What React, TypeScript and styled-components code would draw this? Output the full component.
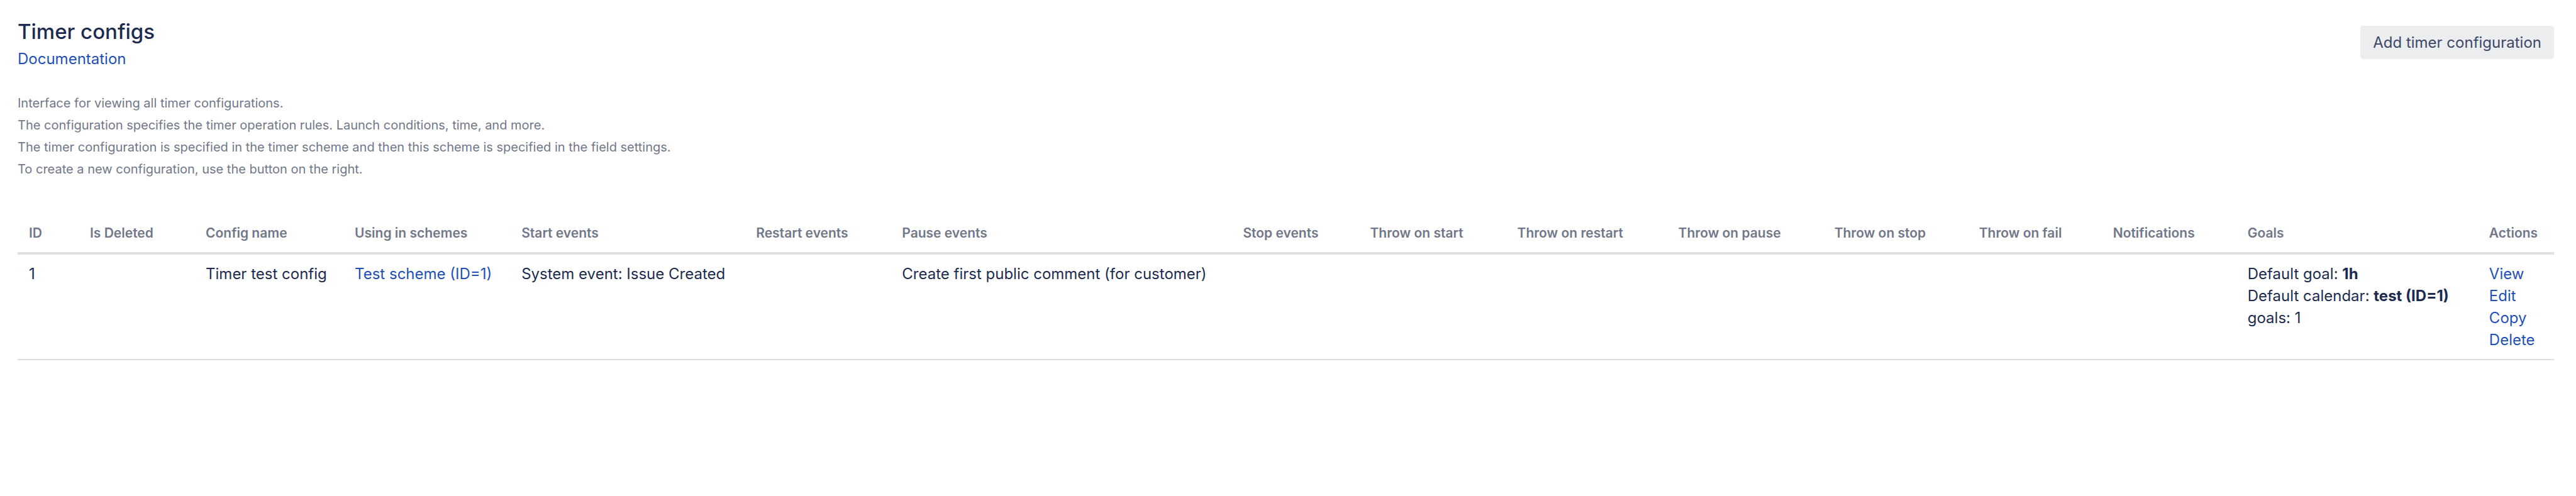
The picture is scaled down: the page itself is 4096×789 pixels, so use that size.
import React from "react";
import styled, { createGlobalStyle } from "styled-components";

const GlobalStyle = createGlobalStyle`
  *, *::before, *::after { box-sizing: border-box; }
  body {
    margin: 0;
    background: #fff;
    color: #1c2b4f;
    font-family: Inter, "Liberation Sans", sans-serif;
    font-size: 24px;
    line-height: 35px;
  }
`;

const Page = styled.main`
  padding: 30px 35px 40px 28px;
`;

const Header = styled.header`
  display: flex;
  justify-content: space-between;
  align-items: flex-start;
`;

const Title = styled.h1`
  margin: 0;
  font-size: 33px;
  line-height: 40px;
  font-weight: 500;
`;

const Link = styled.a`
  color: #2050b8;
  text-decoration: none;
  &:hover { text-decoration: underline; }
`;

const HeaderLink = styled(Link)`
  display: block;
  margin-top: 6px;
`;

const AddButton = styled.button`
  margin-top: 11px;
  padding: 9px 20px;
  border: 0;
  border-radius: 5px;
  background: #ebedef;
  color: #3c4868;
  font: inherit;
  cursor: pointer;
`;

const Description = styled.div`
  margin-top: 36px;
  color: #707789;
  font-size: 20px;
  p { margin: 0; }
`;

const Table = styled.table`
  width: 100%;
  margin-top: 48px;
  table-layout: fixed;
  border-collapse: collapse;
  text-align: left;
`;

const Column = styled.col<{ $share: number }>`
  width: ${({ $share }) => $share}%;
`;

const HeadCell = styled.th`
  padding: 18px 0 13px 18px;
  border-bottom: 4px solid #dfe1e1;
  color: #707789;
  font-size: 21px;
  font-weight: 600;
  white-space: nowrap;
`;

const Cell = styled.td`
  padding: 13px 0 13px 18px;
  border-bottom: 2px solid #dfe1e1;
  vertical-align: top;
  white-space: nowrap;
`;

const ActionList = styled.ul`
  margin: 0;
  padding: 0;
  list-style: none;
`;

const columns = [
  { name: "ID", weight: 97 },
  { name: "Is Deleted", weight: 184 },
  { name: "Config name", weight: 237 },
  { name: "Using in schemes", weight: 265 },
  { name: "Start events", weight: 373 },
  { name: "Restart events", weight: 232 },
  { name: "Pause events", weight: 542 },
  { name: "Stop events", weight: 202 },
  { name: "Throw on start", weight: 234 },
  { name: "Throw on restart", weight: 256 },
  { name: "Throw on pause", weight: 248 },
  { name: "Throw on stop", weight: 230 },
  { name: "Throw on fail", weight: 213 },
  { name: "Notifications", weight: 214 },
  { name: "Goals", weight: 384 },
  { name: "Actions", weight: 121 },
];

const totalWeight = columns.reduce((sum, column) => sum + column.weight, 0);

const actions = ["View", "Edit", "Copy", "Delete"];

export default function App() {
  return (
    <>
      <GlobalStyle />
      <Page>
        <Header>
          <div>
            <Title>Timer configs</Title>
            <HeaderLink href="#documentation">Documentation</HeaderLink>
          </div>
          <AddButton type="button">Add timer configuration</AddButton>
        </Header>
        <Description>
          <p>Interface for viewing all timer configurations.</p>
          <p>The configuration specifies the timer operation rules. Launch conditions, time, and more.</p>
          <p>The timer configuration is specified in the timer scheme and then this scheme is specified in the field settings.</p>
          <p>To create a new configuration, use the button on the right.</p>
        </Description>
        <Table>
          <colgroup>
            {columns.map((column) => (
              <Column key={column.name} $share={(column.weight / totalWeight) * 100} />
            ))}
          </colgroup>
          <thead>
            <tr>
              {columns.map((column) => (
                <HeadCell key={column.name} scope="col">{column.name}</HeadCell>
              ))}
            </tr>
          </thead>
          <tbody>
            <tr>
              <Cell>1</Cell>
              <Cell />
              <Cell>Timer test config</Cell>
              <Cell><Link href="#scheme-1">Test scheme (ID=1)</Link></Cell>
              <Cell>System event: Issue Created</Cell>
              <Cell />
              <Cell>Create first public comment (for customer)</Cell>
              <Cell />
              <Cell />
              <Cell />
              <Cell />
              <Cell />
              <Cell />
              <Cell />
              <Cell>
                <div>Default goal: <strong>1h</strong></div>
                <div>Default calendar: <strong>test (ID=1)</strong></div>
                <div>goals: 1</div>
              </Cell>
              <Cell>
                <ActionList>
                  {actions.map((action) => (
                    <li key={action}><Link href={`#${action.toLowerCase()}`}>{action}</Link></li>
                  ))}
                </ActionList>
              </Cell>
            </tr>
          </tbody>
        </Table>
      </Page>
    </>
  );
}
